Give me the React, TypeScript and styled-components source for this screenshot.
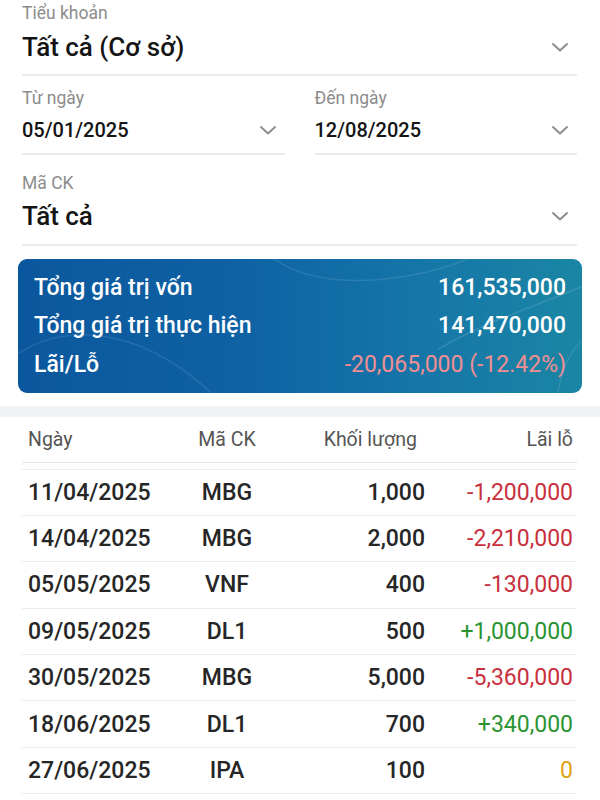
import React from "react";
import styled, { createGlobalStyle } from "styled-components";

const Global = createGlobalStyle`
  html, body { margin: 0; padding: 0; background: #ffffff; }
  body { font-family: Roboto, "Noto Sans", Arial, sans-serif; -webkit-font-smoothing: antialiased; }
  * { box-sizing: border-box; }
`;

const Page = styled.div`
  width: 600px;
  height: 800px;
  overflow: hidden;
  background: #fff;
  display: flex;
  flex-direction: column;
`;

const Filters = styled.div`
  padding: 0 23px 0 22px;
  display: flex;
  flex-direction: column;
`;

const FieldRow = styled.div`
  display: grid;
  grid-template-columns: 1fr 1fr;
  column-gap: 30px;
`;

const Field = styled.div<{ $top: number; $pb: number }>`
  margin-top: ${(p) => p.$top}px;
  padding-bottom: ${(p) => p.$pb}px;
  border-bottom: 2px solid #ebebeb;
  display: flex;
  flex-direction: column;
`;

const Label = styled.div`
  font-size: 17.5px;
  line-height: 20px;
  color: #8c8c8c;
  font-weight: 400;
`;

const ValueLine = styled.div<{ $gap: number }>`
  margin-top: ${(p) => p.$gap}px;
  display: flex;
  align-items: center;
  justify-content: space-between;
`;

const Value = styled.div<{ $size: number; $lh: number }>`
  font-size: ${(p) => p.$size}px;
  line-height: ${(p) => p.$lh}px;
  font-weight: 500;
  color: #141414;
`;

const ChevronBox = styled.span`
  display: inline-flex;
  width: 18px;
  height: 12px;
  margin-right: 8px;
  color: #8d8d8d;
`;

const Chevron = () => (
  <ChevronBox>
    <svg width="18" height="12" viewBox="0 0 18 12" fill="none">
      <path d="M2 3 L9 9.5 L16 3" stroke="currentColor" strokeWidth="2" strokeLinecap="round" strokeLinejoin="round" />
    </svg>
  </ChevronBox>
);

const Card = styled.div`
  position: relative;
  margin: 13px 18px 0 18px;
  border-radius: 9px;
  overflow: hidden;
  background: linear-gradient(90deg, #0b579d 0%, #0f62a4 40%, #1575a8 70%, #1a86a4 100%);
  padding: 9px 16px 9px 16px;
  display: flex;
  flex-direction: column;
`;

const CardDeco = styled.svg`
  position: absolute;
  inset: 0;
  width: 100%;
  height: 100%;
  pointer-events: none;
`;

const CardRow = styled.div`
  position: relative;
  display: flex;
  justify-content: space-between;
  align-items: center;
  height: 38.5px;
  font-size: 23px;
  font-weight: 500;
  color: #ffffff;
`;

const CardValue = styled.span<{ $loss?: boolean }>`
  color: ${(p) => (p.$loss ? "#f08e92" : "#ffffff")};
  font-weight: ${(p) => (p.$loss ? 400 : 500)};
`;

const Band = styled.div`
  margin-top: 13px;
  height: 11px;
  background: #f1f2f4;
`;

const Table = styled.div`
  margin: 0 23px 0 22px;
  display: flex;
  flex-direction: column;
`;

const Grid = styled.div`
  display: grid;
  grid-template-columns: 149px 100px 1fr 1fr;
  align-items: center;
  padding: 0 4px 0 6px;
`;

const HeadRow = styled(Grid)`
  height: 46px;
  border-bottom: 1.5px solid #e2e2e2;
  font-size: 19.5px;
  color: #555;
  font-weight: 400;
`;

const Row = styled(Grid)`
  height: 46.4px;
  border-top: 1.5px solid #ececec;
  font-size: 23px;
  font-weight: 500;
  color: #262626;
  &:first-of-type { margin-top: 6px; }
`;

const Cell = styled.div<{ $align: "left" | "center" | "right"; $pr?: number }>`
  text-align: ${(p) => p.$align};
  padding-right: ${(p) => p.$pr ?? 0}px;
  white-space: nowrap;
`;

const Pnl = styled(Cell)<{ $tone: "up" | "down" | "zero" }>`
  font-weight: 400;
  color: ${(p) => (p.$tone === "up" ? "#2a9433" : p.$tone === "down" ? "#c8303d" : "#e2a214")};
`;

const Rows = styled.div`
  display: flex;
  flex-direction: column;
  border-bottom: 1.5px solid #ececec;
`;

const data = [
  { d: "11/04/2025", s: "MBG", v: "1,000", p: "-1,200,000" },
  { d: "14/04/2025", s: "MBG", v: "2,000", p: "-2,210,000" },
  { d: "05/05/2025", s: "VNF", v: "400", p: "-130,000" },
  { d: "09/05/2025", s: "DL1", v: "500", p: "+1,000,000" },
  { d: "30/05/2025", s: "MBG", v: "5,000", p: "-5,360,000" },
  { d: "18/06/2025", s: "DL1", v: "700", p: "+340,000" },
  { d: "27/06/2025", s: "IPA", v: "100", p: "0" },
];

const tone = (p: string): "up" | "down" | "zero" =>
  p.startsWith("+") ? "up" : p.startsWith("-") ? "down" : "zero";

export default function App() {
  return (
    <Page>
      <Global />
      <Filters>
        <Field $top={3} $pb={11}>
          <Label>Tiểu khoản</Label>
          <ValueLine $gap={8}>
            <Value $size={26} $lh={32}>Tất cả (Cơ sở)</Value>
            <Chevron />
          </ValueLine>
        </Field>
        <FieldRow>
          <Field $top={12} $pb={10}>
            <Label>Từ ngày</Label>
            <ValueLine $gap={9}>
              <Value $size={20} $lh={26}>05/01/2025</Value>
              <Chevron />
            </ValueLine>
          </Field>
          <Field $top={12} $pb={10}>
            <Label>Đến ngày</Label>
            <ValueLine $gap={9}>
              <Value $size={20} $lh={26}>12/08/2025</Value>
              <Chevron />
            </ValueLine>
          </Field>
        </FieldRow>
        <Field $top={18} $pb={12}>
          <Label>Mã CK</Label>
          <ValueLine $gap={7}>
            <Value $size={26} $lh={32}>Tất cả</Value>
            <Chevron />
          </ValueLine>
        </Field>
      </Filters>

      <Card>
        <CardDeco viewBox="0 0 564 133" preserveAspectRatio="none">
          <path d="M-20 110 C 30 60, 120 60, 200 140" stroke="rgba(255,255,255,0.10)" strokeWidth="1.5" fill="none" />
          <path d="M250 -5 C 300 40, 420 20, 470 -10" stroke="rgba(255,255,255,0.10)" strokeWidth="1.5" fill="none" />
          <path d="M420 90 C 470 60, 540 40, 580 20" stroke="rgba(255,255,255,0.12)" strokeWidth="1.5" fill="none" />
          <path d="M540 133 C 545 100, 560 80, 580 70" stroke="rgba(255,255,255,0.10)" strokeWidth="1.5" fill="none" />
        </CardDeco>
        <CardRow>
          <span>Tổng giá trị vốn</span>
          <CardValue>161,535,000</CardValue>
        </CardRow>
        <CardRow>
          <span>Tổng giá trị thực hiện</span>
          <CardValue>141,470,000</CardValue>
        </CardRow>
        <CardRow>
          <span>Lãi/Lỗ</span>
          <CardValue $loss>-20,065,000 (-12.42%)</CardValue>
        </CardRow>
      </Card>

      <Band />

      <Table>
        <HeadRow>
          <Cell $align="left">Ngày</Cell>
          <Cell $align="center">Mã CK</Cell>
          <Cell $align="right" $pr={8}>Khối lượng</Cell>
          <Cell $align="right">Lãi lỗ</Cell>
        </HeadRow>
        <Rows>
          {data.map((r) => (
            <Row key={r.d + r.s}>
              <Cell $align="left">{r.d}</Cell>
              <Cell $align="center">{r.s}</Cell>
              <Cell $align="right">{r.v}</Cell>
              <Pnl $align="right" $tone={tone(r.p)}>{r.p}</Pnl>
            </Row>
          ))}
        </Rows>
      </Table>
    </Page>
  );
}
